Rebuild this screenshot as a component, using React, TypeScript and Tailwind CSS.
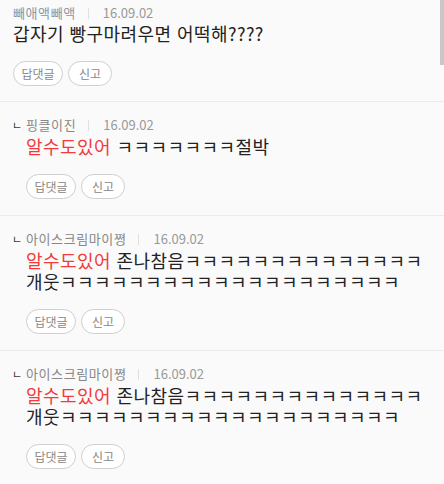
const font = { fontFamily: '"Noto Sans CJK KR", "Liberation Sans", sans-serif' };

type Item = {
  name: string;
  date: string;
  reply?: boolean;
  tag?: string;
  lines: string[];
};

const items: Item[] = [
  { name: '빼애액빼액', date: '16.09.02', lines: ['갑자기 빵구마려우면 어떡해????'] },
  { name: '핑클이진', date: '16.09.02', reply: true, tag: '알수도있어', lines: [' ㅋㅋㅋㅋㅋㅋㅋ절박'] },
  {
    name: '아이스크림마이쪙',
    date: '16.09.02',
    reply: true,
    tag: '알수도있어',
    lines: [' 존나참음ㅋㅋㅋㅋㅋㅋㅋㅋㅋㅋㅋㅋㅋㅋ', '개웃ㅋㅋㅋㅋㅋㅋㅋㅋㅋㅋㅋㅋㅋㅋㅋㅋㅋㅋㅋㅋ'],
  },
  {
    name: '아이스크림마이쪙',
    date: '16.09.02',
    reply: true,
    tag: '알수도있어',
    lines: [' 존나참음ㅋㅋㅋㅋㅋㅋㅋㅋㅋㅋㅋㅋㅋㅋ', '개웃ㅋㅋㅋㅋㅋㅋㅋㅋㅋㅋㅋㅋㅋㅋㅋㅋㅋㅋㅋㅋ'],
  },
];

function Comment({ item, first }: { item: Item; first: boolean }) {
  return (
    <div
      className={`border-b border-[#ebebeb] pr-3 ${first ? 'pt-[5px] pb-[15px]' : 'pt-[15px] pb-[16px]'} ${
        item.reply ? 'pl-[26px]' : 'pl-[13px]'
      }`}
    >
      <div className="relative flex items-center h-4 text-[13px] leading-4 tracking-[0.6px]">
        {item.reply && <span className="absolute -left-[14px] top-0 text-[11px] text-[#333]">ㄴ</span>}
        <span className={first ? 'text-[#8d96a3]' : 'text-[#888]'}>{item.name}</span>
        <span className="ml-[12px] mr-[14px] h-[11px] w-px bg-[#e0e0e0]" />
        <span className="text-[#999] tracking-normal">{item.date}</span>
      </div>
      <div
        className={`text-[18px] leading-[21px] tracking-[0.44px] [word-spacing:1px] text-[#222] whitespace-pre ${
          first ? 'mt-[2px]' : 'mt-[3px]'
        }`}
      >
        {item.lines.map((l, i) => (
          <div key={i}>
            {i === 0 && item.tag && <span className="text-[#f23c3c]">{item.tag}</span>}
            {l}
          </div>
        ))}
      </div>
      <div className="mt-[17px] flex gap-[5px]">
        <button className="h-[25px] w-[50px] rounded-full border border-[#cfcfcf] bg-white text-[12px] text-[#888]">답댓글</button>
        <button className="h-[25px] w-[44px] rounded-full border border-[#cfcfcf] bg-white text-[12px] text-[#888]">신고</button>
      </div>
    </div>
  );
}

export default function App() {
  return (
    <div className="relative h-[484px] w-[444px] overflow-hidden bg-[#fafafa]" style={font}>
      {items.map((item, i) => (
        <Comment key={i} item={item} first={i === 0} />
      ))}
      <div className="absolute right-0 top-0 h-[65px] w-[4px] bg-[#c8c8c8]" />
    </div>
  );
}
